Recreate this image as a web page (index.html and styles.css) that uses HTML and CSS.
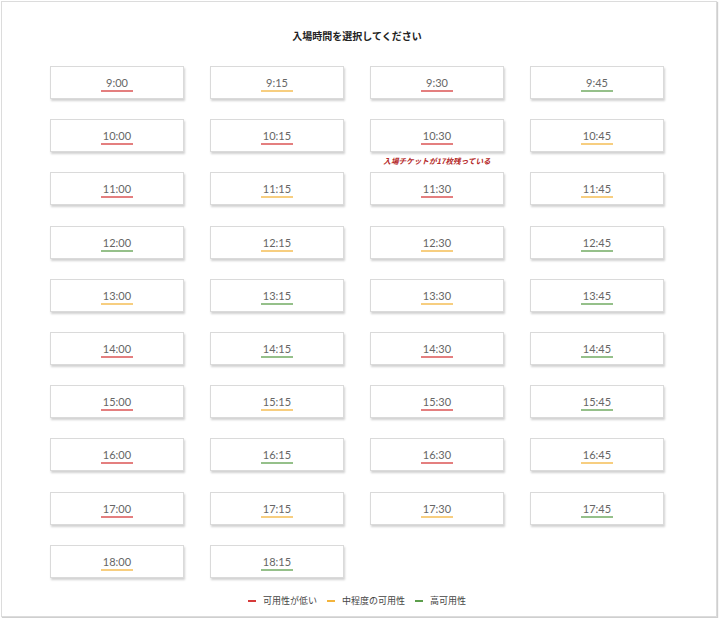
FILE: index.html
```html
<!DOCTYPE html>
<html lang="ja">
<head>
  <meta charset="UTF-8" />
  <meta name="viewport" content="width=device-width, initial-scale=1" />
  <title>入場時間を選択してください</title>
  <link rel="stylesheet" href="styles.css">
</head>
<body>

  <div class="page">
    <h1 class="title">入場時間を選択してください</h1>

    <!-- Time slots -->
    <div class="slots">
      <button class="slot"><span class="time">9:00</span><span class="bar low"></span></button>
      <button class="slot"><span class="time">9:15</span><span class="bar mid"></span></button>
      <button class="slot"><span class="time">9:30</span><span class="bar low"></span></button>
      <button class="slot"><span class="time">9:45</span><span class="bar high"></span></button>

      <button class="slot"><span class="time">10:00</span><span class="bar low"></span></button>
      <button class="slot"><span class="time">10:15</span><span class="bar low"></span></button>
      <button class="slot"><span class="time">10:30</span><span class="bar low"></span>
        <span class="note">入場チケットが17枚残っている</span>
      </button>
      <button class="slot"><span class="time">10:45</span><span class="bar mid"></span></button>

      <button class="slot"><span class="time">11:00</span><span class="bar low"></span></button>
      <button class="slot"><span class="time">11:15</span><span class="bar mid"></span></button>
      <button class="slot"><span class="time">11:30</span><span class="bar low"></span></button>
      <button class="slot"><span class="time">11:45</span><span class="bar mid"></span></button>

      <button class="slot"><span class="time">12:00</span><span class="bar high"></span></button>
      <button class="slot"><span class="time">12:15</span><span class="bar mid"></span></button>
      <button class="slot"><span class="time">12:30</span><span class="bar mid"></span></button>
      <button class="slot"><span class="time">12:45</span><span class="bar high"></span></button>

      <button class="slot"><span class="time">13:00</span><span class="bar mid"></span></button>
      <button class="slot"><span class="time">13:15</span><span class="bar high"></span></button>
      <button class="slot"><span class="time">13:30</span><span class="bar mid"></span></button>
      <button class="slot"><span class="time">13:45</span><span class="bar high"></span></button>

      <button class="slot"><span class="time">14:00</span><span class="bar low"></span></button>
      <button class="slot"><span class="time">14:15</span><span class="bar high"></span></button>
      <button class="slot"><span class="time">14:30</span><span class="bar low"></span></button>
      <button class="slot"><span class="time">14:45</span><span class="bar high"></span></button>

      <button class="slot"><span class="time">15:00</span><span class="bar low"></span></button>
      <button class="slot"><span class="time">15:15</span><span class="bar mid"></span></button>
      <button class="slot"><span class="time">15:30</span><span class="bar low"></span></button>
      <button class="slot"><span class="time">15:45</span><span class="bar high"></span></button>

      <button class="slot"><span class="time">16:00</span><span class="bar low"></span></button>
      <button class="slot"><span class="time">16:15</span><span class="bar high"></span></button>
      <button class="slot"><span class="time">16:30</span><span class="bar low"></span></button>
      <button class="slot"><span class="time">16:45</span><span class="bar mid"></span></button>

      <button class="slot"><span class="time">17:00</span><span class="bar low"></span></button>
      <button class="slot"><span class="time">17:15</span><span class="bar mid"></span></button>
      <button class="slot"><span class="time">17:30</span><span class="bar mid"></span></button>
      <button class="slot"><span class="time">17:45</span><span class="bar high"></span></button>

      <button class="slot"><span class="time">18:00</span><span class="bar mid"></span></button>
      <button class="slot"><span class="time">18:15</span><span class="bar high"></span></button>
    </div>

    <!-- Legend -->
    <div class="legend">
      <span class="legend-item"><span class="dash low"></span>可用性が低い</span>
      <span class="legend-item"><span class="dash mid"></span>中程度の可用性</span>
      <span class="legend-item"><span class="dash high"></span>高可用性</span>
    </div>
  </div>

</body>
</html>
```

FILE: styles.css
```css
* {
  margin: 0;
  padding: 0;
  box-sizing: border-box;
}

body {
  font-family: Lato, "Noto Sans CJK JP", sans-serif;
  background: #fff;
  color: #444;
}

/* Outer card */
.page {
  margin: 1px;
  width: 716px;
  height: 616px;
  border: 1px solid #dcdcdc;
  box-shadow: 1px 1px 1px #cfcfcf;
  background: #fff;
  padding: 27px 4px 0 0;
  display: flex;
  flex-direction: column;
  align-items: center;
}

.title {
  font-family: "Noto Sans CJK JP", sans-serif;
  font-size: 10px;
  line-height: 14px;
  font-weight: bold;
  color: #222;
}

/* Slot grid */
.slots {
  margin-top: 23px;
  display: grid;
  grid-template-columns: repeat(4, 134px);
  grid-auto-rows: 33px;
  column-gap: 26px;
  row-gap: 20.2px;
}

.slot {
  position: relative;
  display: flex;
  flex-direction: column;
  align-items: center;
  padding-top: 9px;
  background: #fff;
  border: 1px solid #dadada;
  box-shadow: 1px 2px 2px rgba(0, 0, 0, 0.18);
  font-family: Lato, sans-serif;
  cursor: pointer;
}

.time {
  font-size: 11px;
  line-height: 13px;
  color: #666;
}

.bar {
  display: block;
  width: 32px;
  height: 2px;
  margin-top: 1px;
  opacity: 0.65;
}

.low { background: #d63a3a; }
.mid { background: #f3b43c; }
.high { background: #5c9e4c; }

/* Tickets-left hint below a slot */
.note {
  position: absolute;
  top: 36px;
  left: -10px;
  right: -10px;
  text-align: center;
  font-family: "Noto Sans CJK JP", sans-serif;
  font-size: 7.6px;
  line-height: 10px;
  font-weight: bold;
  font-style: italic;
  color: #b52a2a;
  white-space: nowrap;
}

/* Legend */
.legend {
  margin-top: 17px;
  display: flex;
  gap: 10px;
  font-family: "Noto Sans CJK JP", sans-serif;
  font-size: 9px;
  line-height: 12px;
  color: #444;
}

.legend-item {
  display: flex;
  align-items: center;
}

.dash {
  width: 8px;
  height: 2px;
  margin-right: 7px;
}
```
